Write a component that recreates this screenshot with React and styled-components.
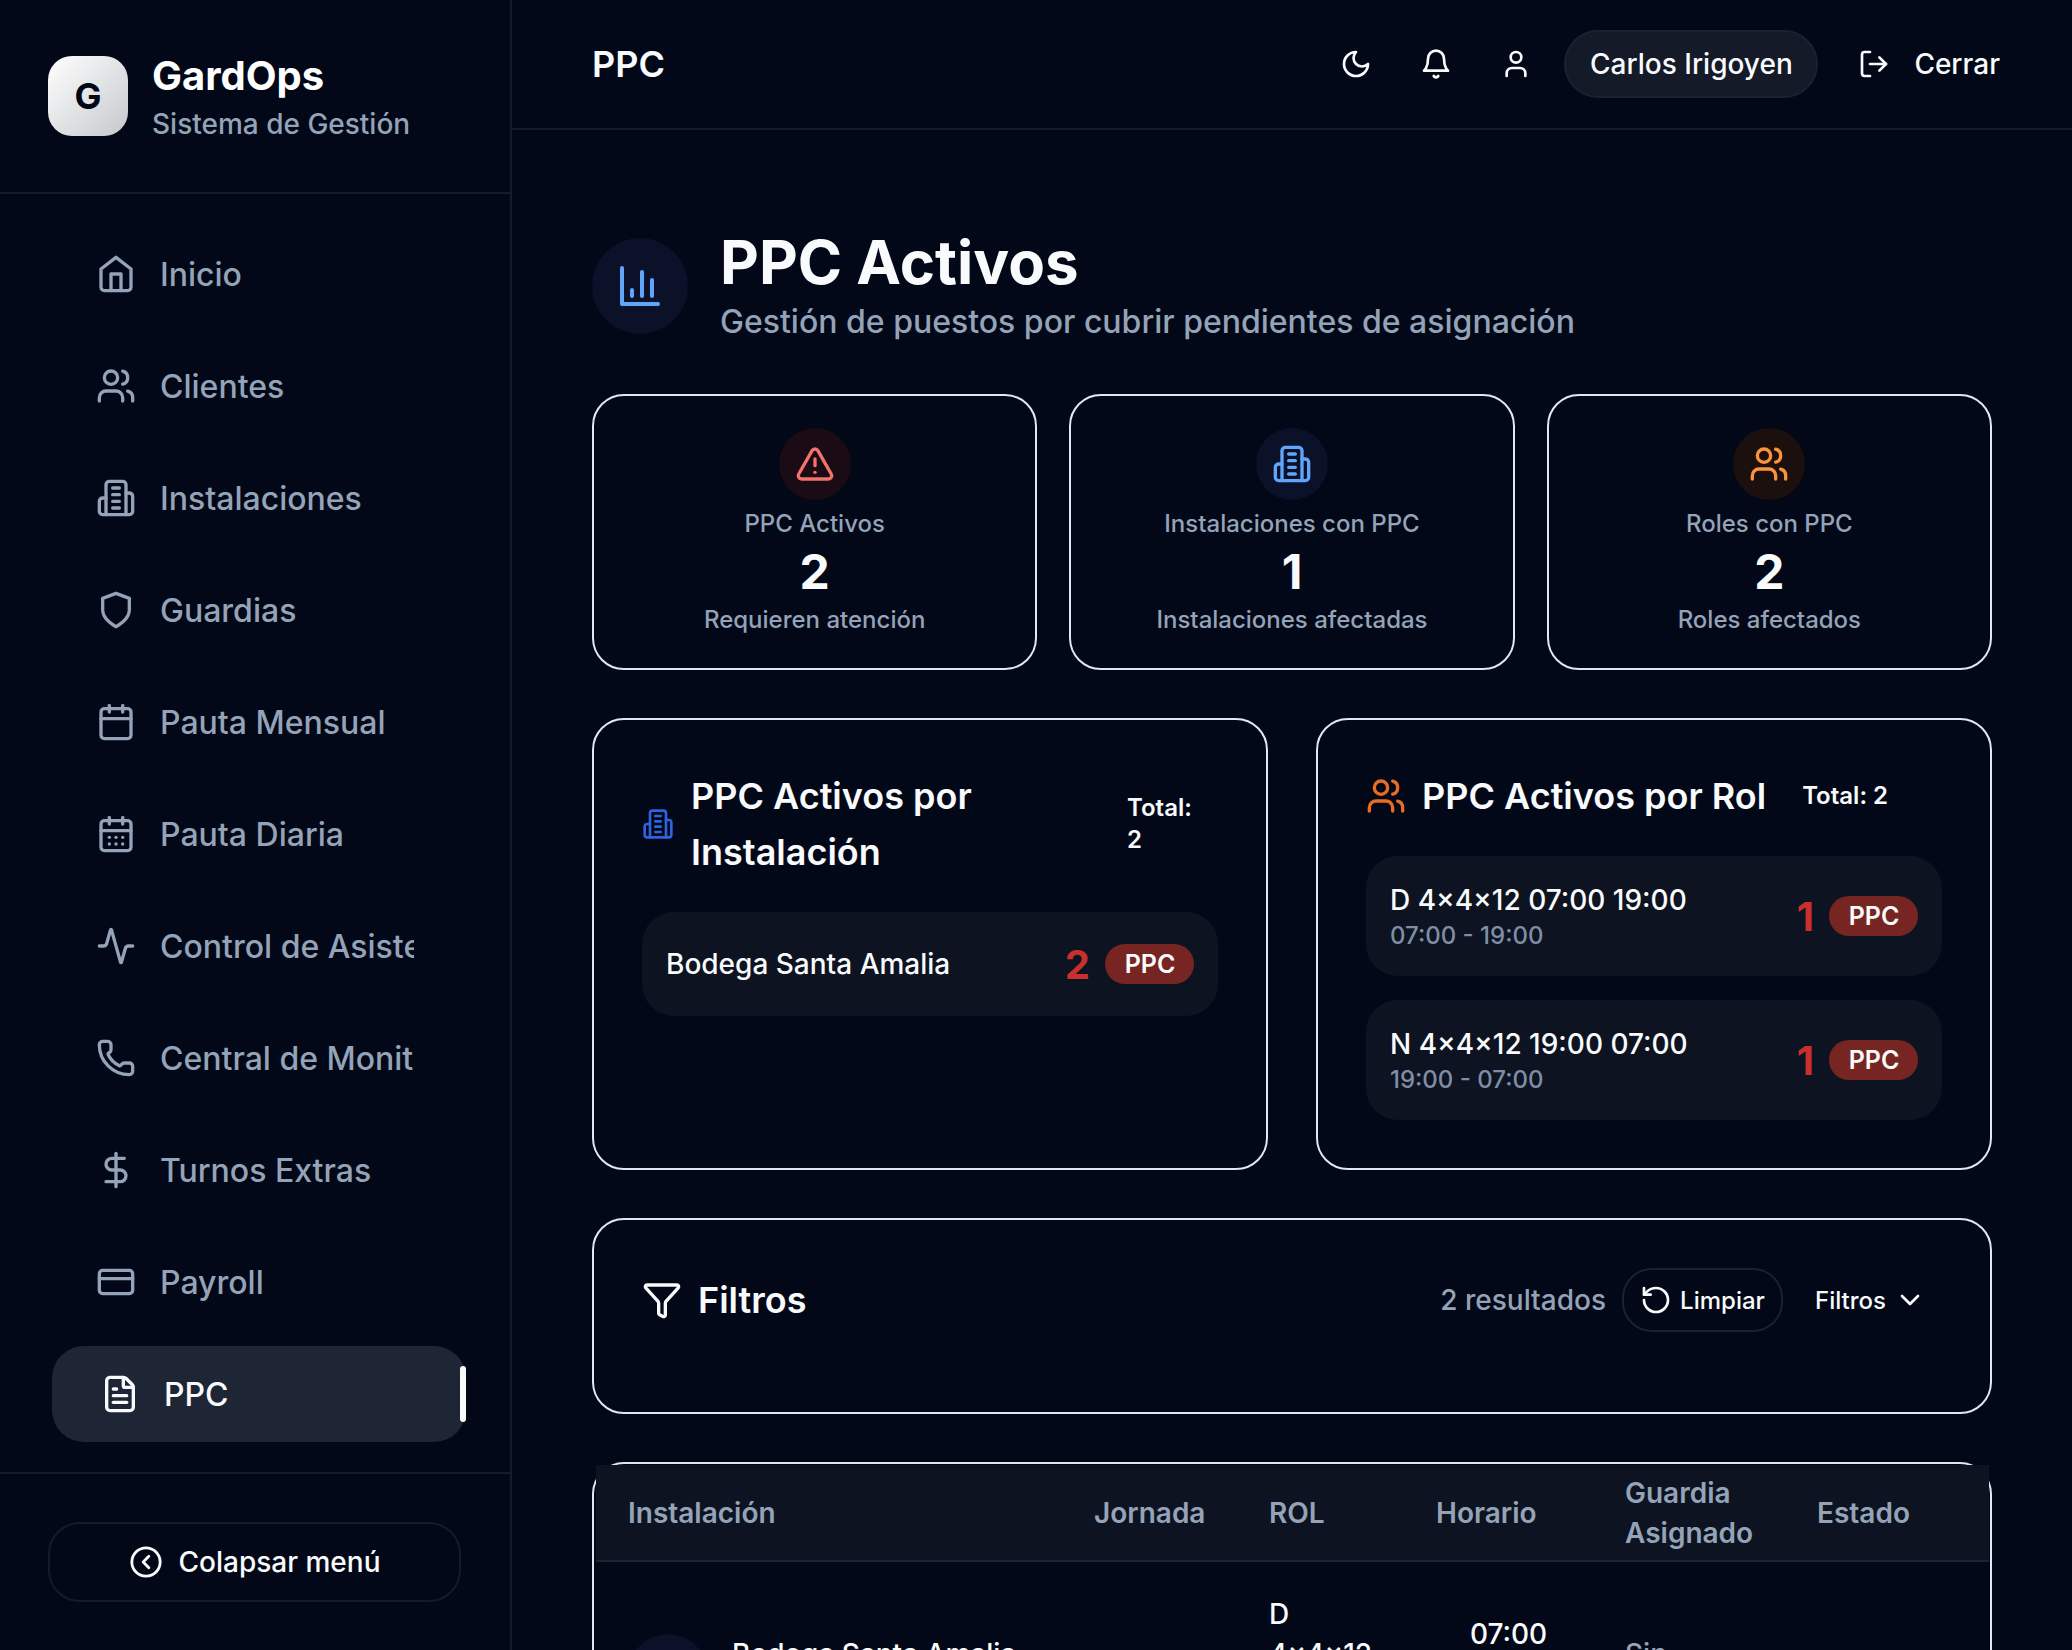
import React from 'react'
import styled, { createGlobalStyle } from 'styled-components'
import {
  Users, Calendar, CalendarDays, Activity, Phone, DollarSign, CreditCard,
  FileText, CircleChevronLeft, User, LogOut, TriangleAlert, Funnel, RotateCcw, ChevronDown,
} from 'lucide-react'

const GlobalStyle = createGlobalStyle`
  html, body { margin: 0; padding: 0; height: 100%; background: #020817; overflow: hidden; }
  body { font-family: Inter, "Liberation Sans", sans-serif; color: #f8fafc; }
  * { box-sizing: border-box; }
`

// older lucide shapes, the package now ships different ones for these
const drawIcon = (...paths) => ({ size = 40, color = 'currentColor' }) => (
  <svg width={size} height={size} viewBox="0 0 24 24" fill="none" stroke={color} strokeWidth="2" strokeLinecap="round" strokeLinejoin="round">
    {paths.map(d => <path key={d} d={d} />)}
  </svg>
)

const Tower = drawIcon(
  'M6 22V4a2 2 0 0 1 2-2h8a2 2 0 0 1 2 2v18Z',
  'M6 12H4a2 2 0 0 0-2 2v6a2 2 0 0 0 2 2h2',
  'M18 9h2a2 2 0 0 1 2 2v9a2 2 0 0 1-2 2h-2',
  'M10 6h4', 'M10 10h4', 'M10 14h4', 'M10 18h4',
)
const BarsIcon = drawIcon('M3 3v18h18', 'M18 17V9', 'M13 17V5', 'M8 17v-3')
const HomeIcon = drawIcon('m3 9 9-7 9 7v11a2 2 0 0 1-2 2H5a2 2 0 0 1-2-2z', 'M9 22V12h6v10')
const ShieldIcon = drawIcon('M12 22s8-4 8-10V5l-8-3-8 3v7c0 6 8 10 8 10z')
const BellIcon = drawIcon('M6 8a6 6 0 0 1 12 0c0 7 3 9 3 9H3s3-2 3-9', 'M10.3 21a1.94 1.94 0 0 0 3.4 0')
const MoonIcon = drawIcon('M12 3a6 6 0 0 0 9 9 9 9 0 1 1-9-9Z')

const Shell = styled.div`
  display: flex;
  height: 1650px;
  overflow: hidden;
  background: #020817;
`
const Sidebar = styled.aside`
  width: 512px;
  flex-shrink: 0;
  height: 100%;
  display: flex;
  flex-direction: column;
  border-right: 2px solid #141b29;
`
const Brand = styled.div`
  display: flex;
  align-items: center;
  gap: 24px;
  padding: 48px;
  border-bottom: 2px solid #141b29;
`
const Logo = styled.div`
  width: 80px;
  height: 80px;
  border-radius: 24px;
  background: linear-gradient(135deg, #ffffff, #c6c8cd);
  color: #020817;
  font-size: 36px;
  font-weight: 700;
  display: flex;
  align-items: center;
  justify-content: center;
`
const BrandName = styled.div`
  font-size: 40px;
  line-height: 56px;
  font-weight: 700;
  color: #fff;
`
const BrandSub = styled.div`
  font-size: 28px;
  line-height: 40px;
  font-weight: 500;
  color: #94a3b8;
`
const Nav = styled.nav`
  flex: 1;
  display: flex;
  flex-direction: column;
  gap: 16px;
  padding: 32px 48px;
  min-height: 0;
`
const NavItem = styled.div`
  position: relative;
  display: flex;
  align-items: center;
  gap: 24px;
  height: 96px;
  flex-shrink: 0;
  padding: 0 48px;
  border-radius: 32px;
  font-size: 32px;
  font-weight: 500;
  color: ${p => (p.$active ? '#f8fafc' : '#94a3b8')};
  background: ${p => (p.$active ? '#1e2534' : 'transparent')};
  transform: ${p => (p.$active ? 'translateX(4px)' : 'none')};
  svg { flex-shrink: 0; }
`
const NavLabel = styled.span`
  flex: 1;
  min-width: 0;
  overflow: hidden;
  white-space: nowrap;
`
const ActiveBar = styled.span`
  position: absolute;
  right: 0;
  top: 20px;
  bottom: 20px;
  width: 6px;
  border-radius: 4px;
  background: #f8fafc;
`
const SideFooter = styled.div`
  padding: 48px;
  border-top: 2px solid #141b29;
`
const CollapseButton = styled.div`
  height: 80px;
  width: 413px;
  display: flex;
  align-items: center;
  justify-content: center;
  gap: 16px;
  border: 2px solid #141b29;
  border-radius: 32px;
  font-size: 28px;
  font-weight: 500;
  color: #f8fafc;
`

const Main = styled.main`
  flex: 1;
  min-width: 0;
  height: 100%;
  display: flex;
  flex-direction: column;
  overflow: hidden;
`
const TopBar = styled.header`
  height: 130px;
  flex-shrink: 0;
  display: flex;
  align-items: center;
  justify-content: space-between;
  padding: 0 48px 0 80px;
  border-bottom: 2px solid #141b29;
`
const TopTitle = styled.div`
  font-size: 36px;
  font-weight: 600;
  color: #f8fafc;
`
const TopActions = styled.div`
  display: flex;
  align-items: center;
  gap: 16px;
`
const IconButton = styled.div`
  width: 64px;
  height: 64px;
  display: flex;
  align-items: center;
  justify-content: center;
  color: #f8fafc;
`
const UserPill = styled.div`
  height: 68px;
  width: 254px;
  display: flex;
  align-items: center;
  justify-content: center;
  background: #141a28;
  border: 2px solid #1a2130;
  border-radius: 34px;
  font-size: 28px;
  font-weight: 500;
  color: #f8fafc;
`
const LogoutButton = styled.div`
  display: flex;
  align-items: center;
  gap: 24px;
  padding: 0 24px;
  font-size: 28px;
  font-weight: 500;
  color: #f8fafc;
`

const Content = styled.div`
  flex: 1;
  min-height: 0;
  display: flex;
  flex-direction: column;
  gap: 48px;
  padding: 96px 80px 0;
  > * { flex-shrink: 0; }
`
const PageHead = styled.div`
  display: flex;
  align-items: center;
  gap: 32px;
`
const HeadIcon = styled.div`
  width: 96px;
  height: 96px;
  border-radius: 50%;
  background: #0a1128;
  color: #60a5fa;
  display: flex;
  align-items: center;
  justify-content: center;
`
const PageTitle = styled.h1`
  margin: 0;
  font-size: 60px;
  line-height: 72px;
  font-weight: 700;
  color: #f8fafc;
`
const PageSub = styled.p`
  margin: 0;
  font-size: 32px;
  line-height: 48px;
  font-weight: 500;
  color: #94a3b8;
`
const StatGrid = styled.div`
  display: grid;
  grid-template-columns: repeat(3, 1fr);
  gap: 32px;
`
const Card = styled.section`
  border: 2px solid #e2e8f0;
  border-radius: 32px;
  background: #020817;
`
const StatCard = styled(Card)`
  height: 276px;
  padding: 32px 32px 0;
  display: flex;
  flex-direction: column;
  align-items: center;
`
const StatIcon = styled.div`
  width: 72px;
  height: 72px;
  flex-shrink: 0;
  border-radius: 50%;
  background: ${p => p.$bg};
  color: ${p => p.$color};
  display: flex;
  align-items: center;
  justify-content: center;
  margin-bottom: 4px;
`
const StatLabel = styled.div`
  font-size: 24px;
  line-height: 40px;
  font-weight: 500;
  color: #94a3b8;
`
const StatValue = styled.div`
  font-size: 48px;
  line-height: 56px;
  font-weight: 700;
  color: #f8fafc;
`
const StatNote = styled.div`
  font-size: 24px;
  line-height: 40px;
  font-weight: 500;
  color: #94a3b8;
`
const TwoCols = styled.div`
  display: grid;
  grid-template-columns: repeat(2, 1fr);
  gap: 48px;
`
const ListCard = styled(Card)`
  height: 452px;
  padding: 48px;
`
const ListHead = styled.div`
  display: flex;
  align-items: center;
  gap: ${p => p.$gap}px;
  margin-bottom: 32px;
`
const ListTitle = styled.h2`
  margin: 0;
  font-size: 36px;
  line-height: 56px;
  font-weight: 600;
  color: #f8fafc;
  width: ${p => p.$width};
`
const ListTotal = styled.div`
  font-size: 24px;
  line-height: 32px;
  font-weight: 600;
  color: #f8fafc;
  margin-left: ${p => p.$left}px;
  width: ${p => p.$width};
`
const Rows = styled.div`
  display: flex;
  flex-direction: column;
  gap: 24px;
`
const Row = styled.div`
  height: ${p => p.$height}px;
  display: flex;
  align-items: center;
  justify-content: space-between;
  padding: 0 24px;
  border-radius: 32px;
  background: #0d1320;
`
const RowName = styled.div`
  font-size: 28px;
  line-height: 40px;
  font-weight: 500;
  color: #f8fafc;
`
const RowSub = styled.div`
  font-size: 24px;
  line-height: 32px;
  font-weight: 500;
  color: #7f8ea6;
`
const RowCount = styled.div`
  display: flex;
  align-items: center;
  gap: 15px;
`
const Count = styled.span`
  font-size: 40px;
  font-weight: 700;
  color: #c9302b;
`
const Badge = styled.span`
  height: 40px;
  width: 89px;
  padding-left: 1px;
  display: flex;
  align-items: center;
  justify-content: center;
  border-radius: 20px;
  background: #772522;
  font-size: 25px;
  font-weight: 600;
  color: #f8fafc;
`
const FilterCard = styled(Card)`
  height: 196px;
  padding: 48px;
`
const FilterBar = styled.div`
  display: flex;
  align-items: center;
  height: 64px;
  gap: 16px;
`
const FilterTitle = styled.div`
  flex: 1;
  display: flex;
  align-items: center;
  gap: 16px;
  font-size: 36px;
  font-weight: 600;
  color: #f8fafc;
`
const Results = styled.span`
  font-size: 28px;
  font-weight: 500;
  color: #94a3b8;
`
const ClearButton = styled.div`
  height: 64px;
  width: 161px;
  display: flex;
  align-items: center;
  justify-content: center;
  gap: 8px;
  border: 2px solid #1a2130;
  border-radius: 30px;
  font-size: 24px;
  font-weight: 500;
  color: #f8fafc;
`
const FilterToggle = styled.div`
  display: flex;
  align-items: center;
  gap: 8px;
  margin-left: -8px;
  padding: 0 16px 0 24px;
  font-size: 24px;
  font-weight: 500;
  color: #f8fafc;
`

const TableCard = styled(Card)`
  padding: 1px 1px 0 2px;
  border-bottom: none;
  border-radius: 32px 32px 0 0;
`
const Table = styled.table`
  width: 100%;
  table-layout: fixed;
  border-collapse: collapse;
`
const HeadRow = styled.tr`
  background: #0d1320;
  border-bottom: 2px solid #1c2433;
`
const Th = styled.th`
  width: ${p => p.$width}px;
  height: 96px;
  padding: 0 32px;
  text-align: left;
  font-size: 28px;
  line-height: 40px;
  font-weight: 600;
  color: #94a3b8;
`
const Td = styled.td`
  padding: 32px;
  font-size: 28px;
  line-height: 40px;
  font-weight: 500;
  color: #f8fafc;
  vertical-align: middle;
`
const HoursCell = styled(Td)`
  padding-left: 52px;
  text-align: center;
`
const HoursLine = styled.div``
const PlaceCell = styled.div`
  display: flex;
  gap: 24px;
  height: 80px;
`
const PlaceIcon = styled.div`
  width: 80px;
  height: 80px;
  flex-shrink: 0;
  border-radius: 50%;
  background: #0a1128;
`
const Muted = styled.span`
  color: #94a3b8;
`

const navItems = [
  ['Inicio', HomeIcon],
  ['Clientes', Users],
  ['Instalaciones', Tower],
  ['Guardias', ShieldIcon],
  ['Pauta Mensual', Calendar],
  ['Pauta Diaria', CalendarDays],
  ['Control de Asistencia', Activity],
  ['Central de Monitoreo', Phone],
  ['Turnos Extras', DollarSign],
  ['Payroll', CreditCard],
  ['PPC', FileText],
]

const stats = [
  { label: 'PPC Activos', value: 2, note: 'Requieren atención', bg: '#1a0b14', color: '#f0736c', icon: <TriangleAlert size={40} /> },
  { label: 'Instalaciones con PPC', value: 1, note: 'Instalaciones afectadas', bg: '#0a1128', color: '#60a5fa', icon: <Tower size={40} /> },
  { label: 'Roles con PPC', value: 2, note: 'Roles afectados', bg: '#1c100f', color: '#fb923c', icon: <Users size={40} /> },
]

const roles = [
  { name: 'D 4×4×12 07:00 19:00', hours: '07:00 - 19:00' },
  { name: 'N 4×4×12 19:00 07:00', hours: '19:00 - 07:00' },
]

function App() {
  return (
    <Shell>
      <GlobalStyle />
      <Sidebar>
        <Brand>
          <Logo>G</Logo>
          <div>
            <BrandName>GardOps</BrandName>
            <BrandSub>Sistema de Gestión</BrandSub>
          </div>
        </Brand>
        <Nav>
          {navItems.map(([label, Icon]) => (
            <NavItem key={label} $active={label === 'PPC'}>
              <Icon size={40} />
              <NavLabel>{label}</NavLabel>
              {label === 'PPC' && <ActiveBar />}
            </NavItem>
          ))}
        </Nav>
        <SideFooter>
          <CollapseButton>
            <CircleChevronLeft size={34} />
            Colapsar menú
          </CollapseButton>
        </SideFooter>
      </Sidebar>
      <Main>
        <TopBar>
          <TopTitle>PPC</TopTitle>
          <TopActions>
            <IconButton><MoonIcon size={32} /></IconButton>
            <IconButton><BellIcon size={32} /></IconButton>
            <IconButton><User size={32} /></IconButton>
            <UserPill>Carlos Irigoyen</UserPill>
            <LogoutButton><LogOut size={32} />Cerrar</LogoutButton>
          </TopActions>
        </TopBar>
        <Content>
          <PageHead>
            <HeadIcon><BarsIcon size={48} /></HeadIcon>
            <div>
              <PageTitle>PPC Activos</PageTitle>
              <PageSub>Gestión de puestos por cubrir pendientes de asignación</PageSub>
            </div>
          </PageHead>
          <StatGrid>
            {stats.map(s => (
              <StatCard key={s.label}>
                <StatIcon $bg={s.bg} $color={s.color}>{s.icon}</StatIcon>
                <StatLabel>{s.label}</StatLabel>
                <StatValue>{s.value}</StatValue>
                <StatNote>{s.note}</StatNote>
              </StatCard>
            ))}
          </StatGrid>
          <TwoCols>
            <ListCard>
              <ListHead $gap={17}>
                <Tower size={32} color="#2f62e0" />
                <ListTitle $width="330px">PPC Activos por Instalación</ListTitle>
                <ListTotal $left={89} $width="80px">Total: 2</ListTotal>
              </ListHead>
              <Rows>
                <Row $height={104}>
                  <RowName>Bodega Santa Amalia</RowName>
                  <RowCount><Count>2</Count><Badge>PPC</Badge></RowCount>
                </Row>
              </Rows>
            </ListCard>
            <ListCard>
              <ListHead $gap={16}>
                <Users size={40} color="#ea6c22" />
                <ListTitle>PPC Activos por Rol</ListTitle>
                <ListTotal $left={20}>Total: 2</ListTotal>
              </ListHead>
              <Rows>
                {roles.map(r => (
                  <Row key={r.name} $height={120}>
                    <div>
                      <RowName>{r.name}</RowName>
                      <RowSub>{r.hours}</RowSub>
                    </div>
                    <RowCount><Count>1</Count><Badge>PPC</Badge></RowCount>
                  </Row>
                ))}
              </Rows>
            </ListCard>
          </TwoCols>
          <FilterCard>
            <FilterBar>
              <FilterTitle><Funnel size={40} />Filtros</FilterTitle>
              <Results>2 resultados</Results>
              <ClearButton><RotateCcw size={32} />Limpiar</ClearButton>
              <FilterToggle>Filtros<ChevronDown size={32} /></FilterToggle>
            </FilterBar>
          </FilterCard>
          <TableCard>
            <Table>
              <thead>
                <HeadRow>
                  <Th $width={466}>Instalación</Th>
                  <Th $width={175}>Jornada</Th>
                  <Th $width={167}>ROL</Th>
                  <Th $width={189}>Horario</Th>
                  <Th $width={192}>Guardia Asignado</Th>
                  <Th $width={204}>Estado</Th>
                </HeadRow>
              </thead>
              <tbody>
                <tr>
                  <Td>
                    <PlaceCell>
                      <PlaceIcon />
                      <span>Bodega Santa Amalia</span>
                    </PlaceCell>
                  </Td>
                  <Td />
                  <Td>D 4×4×12 07:00 19:00</Td>
                  <HoursCell>
                    <HoursLine>07:00</HoursLine>
                    <HoursLine>-</HoursLine>
                    <HoursLine>19:00</HoursLine>
                  </HoursCell>
                  <Td><Muted>Sin asignar</Muted></Td>
                  <Td />
                </tr>
              </tbody>
            </Table>
          </TableCard>
        </Content>
      </Main>
    </Shell>
  )
}

export default App
